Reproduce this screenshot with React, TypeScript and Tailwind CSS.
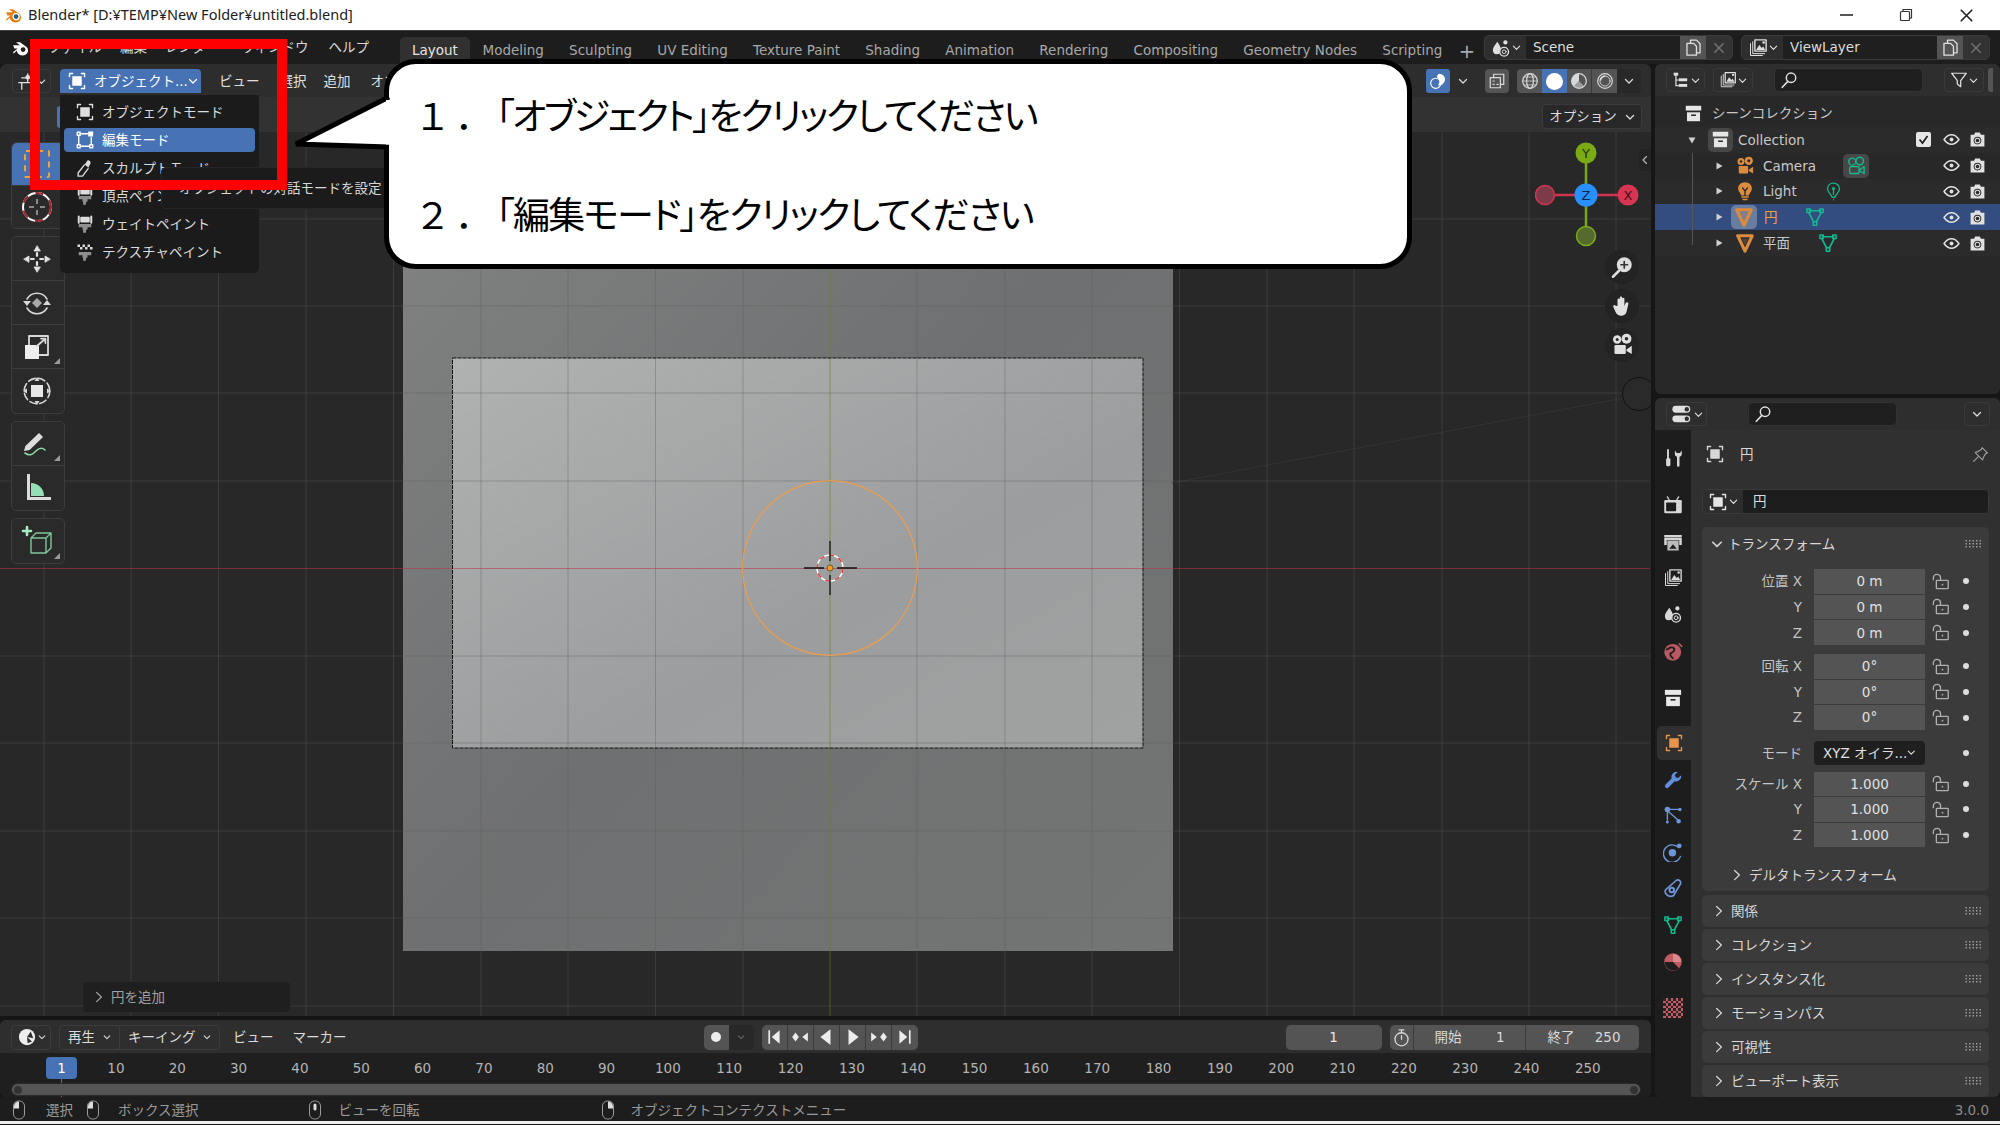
import type { ReactNode } from 'react';

type IconProps = { size?: number; className?: string };

const Svg = ({ size = 18, className, children, vb = '0 0 16 16' }: IconProps & { children: ReactNode; vb?: string }) => (
  <svg
    width={size}
    height={size}
    viewBox={vb}
    className={className}
    fill="none"
    stroke="currentColor"
    strokeWidth="1.1"
    strokeLinecap="round"
    strokeLinejoin="round"
  >
    {children}
  </svg>
);

const Chevron = ({ size = 10, className }: IconProps) => (
  <Svg size={size} className={className} vb="0 0 10 10">
    <path d="M1.5 3.5 5 7l3.5-3.5" strokeWidth="1.3" />
  </Svg>
);
const ChevronRight = ({ size = 12, className }: IconProps) => (
  <Svg size={size} className={className} vb="0 0 10 10">
    <path d="M3 1.2 7 5 3 8.8" strokeWidth="1" />
  </Svg>
);
const Caret = ({ down }: { down?: boolean }) => (
  <svg width="12" height="12" viewBox="0 0 12 12" className="text-[#d0d0d0] shrink-0">
    {down ? <path d="M2.5 3.5h7L6 9.5z" fill="currentColor" /> : <path d="M3.5 2.5 9.5 6l-6 3.5z" fill="currentColor" />}
  </svg>
);

const BlenderLogo = ({ size = 18, body = '#e87d0d', eye = '#265787', className }: IconProps & { body?: string; eye?: string }) => (
  <svg width={size} height={size} viewBox="0 0 18 18" className={className}>
    <path d="M1 6.6h6.2L3.6 3.9h3.6l5.3 3.8c2.9 2.2 2.4 6-.4 7.4-2.6 1.3-6 .4-7.3-2.1-.3-.6-.4-1.2-.3-1.7L1.5 13.9c-.6-.1-.6-1-.1-1.5l3.7-2.9H2.200z" fill={body} />
    <circle cx="10" cy="10.400" r="3.300" fill="#fff" />
    <circle cx="10" cy="10.400" r="2.100" fill={eye} />
  </svg>
);

const ObjectIcon = ({ size = 18, className }: IconProps) => (
  <Svg size={size} className={className}>
    <path d="M2 4.500V2h2.500M11.500 2H14v2.500M14 11.500V14h-2.500M4.500 14H2v-2.500" />
    <rect x="4.200" y="4.200" width="7.600" height="7.600" fill="currentColor" stroke="none" />
  </Svg>
);
const EditIcon = ({ size = 18, className }: IconProps) => (
  <Svg size={size} className={className}>
    <path d="M4 3h6M3 4.500v7M13 6v5.500M4.500 13h7" />
    <rect x="1.800" y="1.800" width="2.400" height="2.400" />
    <rect x="1.800" y="11.800" width="2.400" height="2.400" />
    <rect x="11.800" y="11.800" width="2.400" height="2.400" />
    <rect x="10.500" y="1.200" width="4" height="4" fill="#fff" stroke="none" />
  </Svg>
);
const SculptIcon = ({ size = 18, className }: IconProps) => (
  <Svg size={size} className={className}>
    <path d="M7.500 5.500 2.500 12v2.500H6l4.500-6" />
    <path d="M7.800 5.200 9.800 2.200c.8-1 3.200.5 2.600 1.900L10.700 7.800z" fill="currentColor" stroke="none" />
  </Svg>
);
const PaintIcon = ({ size = 18, className, top = 'drops' }: IconProps & { top?: 'drops' | 'weight' | 'check' }) => (
  <Svg size={size} className={className}>
    {top === 'weight' && <path d="M3 2v5M13 2v5M5 3v3h6V3z" fill="currentColor" strokeWidth="1.600" />}
    {top === 'drops' && <path d="M3 2v5M13 2v5M5 3v3h6V3z" fill="currentColor" strokeWidth="1.600" />}
    {top === 'check' && (
      <path d="M2 2h2v2H2zM6 2h2v2H6zM10 2h2v2h-2zM4 4h2v2H4zM8 4h2v2H8zM12 4h2v2h-2z" fill="currentColor" stroke="none" />
    )}
    <path d="M3 8h10v2.500h-3v2H8.800V15H6.500v-2.500H6v-2H3z" fill="#8f8f8f" stroke="none" />
  </Svg>
);

const OverlayIcon = ({ size = 18 }: IconProps) => (
  <Svg size={size}>
    <circle cx="6" cy="10" r="4.500" strokeWidth="1" />
    <path d="M9 1.500a5.200 5.200 0 1 1-1 10.300 4.800 4.800 0 0 0-1-7.300c.2-1.300.9-2.500 2-3z" fill="currentColor" stroke="none" />
  </Svg>
);
const XrayIcon = ({ size = 18 }: IconProps) => (
  <Svg size={size}>
    <path d="M5 5V2h9v9h-3" />
    <rect x="2" y="5" width="9" height="9" />
    <path d="M4.500 8h1M4.500 11h1M8 11h1" />
  </Svg>
);
const WireIcon = ({ size = 18 }: IconProps) => (
  <Svg size={size}>
    <circle cx="8" cy="8" r="6.500" />
    <ellipse cx="8" cy="8" rx="3" ry="6.500" />
    <path d="M1.500 8h13M2.500 4.500h11M2.500 11.500h11" strokeWidth=".7" />
  </Svg>
);
const MaterialIcon = ({ size = 18 }: IconProps) => (
  <Svg size={size}>
    <circle cx="8" cy="8" r="6.500" />
    <path d="M8 1.500a6.500 6.500 0 0 0-4.600 11.100L8 8z" fill="currentColor" stroke="none" />
    <path d="M8 8l4.600 4.600A6.500 6.500 0 0 1 3.400 12.600z" fill="currentColor" stroke="none" opacity=".55" />
  </Svg>
);
const RenderIcon = ({ size = 18 }: IconProps) => (
  <Svg size={size}>
    <circle cx="8" cy="8" r="6.500" />
    <circle cx="8" cy="8" r="4.500" strokeWidth=".8" />
    <path d="M4 7c.5-2 2-3 3.500-3.200" strokeWidth="1.400" />
  </Svg>
);
const TreeIcon = ({ size = 18 }: IconProps) => (
  <Svg size={size}>
    <rect x="1.500" y="1.500" width="4" height="2.600" fill="currentColor" stroke="none" />
    <rect x="6" y="6.500" width="7.500" height="2.600" fill="currentColor" stroke="none" />
    <rect x="6" y="11.500" width="7.500" height="2.600" fill="currentColor" stroke="none" />
    <path d="M3.500 4v9h2M3.500 8h2" />
  </Svg>
);
const LayersIcon = ({ size = 18 }: IconProps) => (
  <Svg size={size}>
    <path d="M2 4.500V14h9.500M3.800 3v9.500h9.500" strokeWidth=".8" />
    <rect x="5.500" y="1.500" width="9" height="9" />
    <path d="M6.500 9.500 9 5.500l2 2.500 1.200-1.200 1.500 2.700z" fill="currentColor" stroke="none" />
    <circle cx="12.500" cy="3.500" r="1" fill="currentColor" stroke="none" />
  </Svg>
);
const SearchIcon = ({ size = 18 }: IconProps) => (
  <Svg size={size}>
    <circle cx="9.800" cy="6" r="4.200" strokeWidth="1.300" />
    <path d="M7 9.200 2 14.500" strokeWidth="1.400" />
  </Svg>
);
const FilterIcon = ({ size = 18 }: IconProps) => (
  <Svg size={size}>
    <path d="M1.500 2h13L9.500 8.500V14l-3-2.500v-3z" />
  </Svg>
);
const SceneIcon = ({ size = 18 }: IconProps) => (
  <Svg size={size}>
    <path d="M5 3c1.500 2.300 3 4.200 3 6.500S6.500 13 4.500 13 1.500 11.500 1.500 9.500 3.500 5.300 5 3z" fill="currentColor" stroke="none" />
    <circle cx="10.500" cy="11" r="3.500" fill="#2b2b2b" />
    <circle cx="10.500" cy="11" r="1.500" strokeWidth=".8" />
    <circle cx="11.500" cy="3.500" r="1.700" fill="currentColor" stroke="none" />
  </Svg>
);
const CopyIcon = ({ size = 18 }: IconProps) => (
  <Svg size={size}>
    <path d="M5.500 4.500V1.800h5l3 3v7.700h-3" />
    <path d="M2.500 4.500h5.500l2.500 2.500v7.500h-8z" />
  </Svg>
);
const CloseX = ({ size = 12, className }: IconProps) => (
  <Svg size={size} className={className} vb="0 0 10 10">
    <path d="M1.500 1.500l7 7M8.500 1.500l-7 7" />
  </Svg>
);
const CollectionIcon = ({ size = 18 }: IconProps) => (
  <Svg size={size}>
    <rect x="1.500" y="1.500" width="13" height="4" fill="currentColor" stroke="none" />
    <rect x="2.500" y="7" width="11" height="7.500" fill="currentColor" stroke="none" />
    <rect x="6" y="8.800" width="4" height="1.300" fill="#2a2a2a" stroke="none" />
  </Svg>
);
const Eye = ({ size = 17 }: IconProps) => (
  <Svg size={size}>
    <path d="M1 8c2-3 4.300-4.500 7-4.500S13 5 15 8c-2 3-4.300 4.500-7 4.500S3 11 1 8z" strokeWidth="1.500" />
    <circle cx="8" cy="8" r="1.800" fill="currentColor" stroke="none" />
  </Svg>
);
const RenderCam = ({ size = 17 }: IconProps) => (
  <Svg size={size}>
    <path d="M1.500 3.500h3.300l1-2h4.400l1 2h3.300v11h-13z" fill="currentColor" stroke="none" />
    <circle cx="8" cy="9" r="3.600" fill="#2b2b2b" stroke="none" />
    <circle cx="8" cy="9" r="2.200" strokeWidth="1" />
  </Svg>
);
const CameraObj = ({ size = 18, className }: IconProps) => (
  <Svg size={size} className={className}>
    <circle cx="4.800" cy="4.300" r="2.800" fill="currentColor" stroke="none" />
    <circle cx="11" cy="3.800" r="3.300" fill="currentColor" stroke="none" />
    <circle cx="4.800" cy="4.300" r="1" fill="#2b2b2b" stroke="none" />
    <circle cx="11" cy="3.800" r="1.200" fill="#2b2b2b" stroke="none" />
    <rect x="3" y="8" width="7.500" height="6" rx=".8" fill="currentColor" stroke="none" />
    <path d="M11 11l3.500-2.500V14L11 12z" fill="currentColor" stroke="none" />
  </Svg>
);
const CameraData = ({ size = 18, className }: IconProps) => (
  <Svg size={size} className={className}>
    <circle cx="5" cy="4.500" r="2.800" />
    <circle cx="11" cy="4" r="3" />
    <rect x="3" y="8.500" width="7.500" height="5.500" rx=".8" />
    <path d="M11 11l3.500-2.500V14L11 12z" />
  </Svg>
);
const BulbObj = ({ size = 18, className }: IconProps) => (
  <Svg size={size} className={className}>
    <path d="M8 1c3.200 0 5.500 2.200 5.500 5 0 2.300-1.700 3.400-2.500 5.500H5C4.200 9.400 2.500 8.300 2.500 6c0-2.800 2.300-5 5.500-5z" fill="currentColor" stroke="none" />
    <path d="M6 5.500 8 8l2-2.500M8 8v3.500" stroke="#2b2b2b" />
    <path d="M5.500 12.800h5M6.500 14.800h3" strokeWidth="1.300" />
  </Svg>
);
const BulbData = ({ size = 18, className }: IconProps) => (
  <Svg size={size} className={className}>
    <path d="M8 1c3 0 5 2 5 4.800 0 2.600-3.300 5-4 7.200H7C6.300 10.800 3 8.400 3 5.800 3 3 5 1 8 1z" />
    <circle cx="8" cy="5.500" r="1.300" fill="currentColor" stroke="none" />
    <path d="M8 7v3.500M8 14.800v.2" />
  </Svg>
);
const MeshObj = ({ size = 18, className }: IconProps) => (
  <Svg size={size} className={className}>
    <path d="M2.200 2.200h11.600L8 14.500z" strokeWidth="2.500" />
    <path d="M5.500 4.500h5L8 10z" fill="currentColor" opacity=".25" stroke="none" />
  </Svg>
);
const MeshData = ({ size = 18, className }: IconProps) => (
  <Svg size={size} className={className}>
    <path d="M3.500 3h9M3 4.500 7 12M13 4.500 9 12" strokeWidth="1.300" />
    <rect x="1.500" y="1.500" width="2.800" height="2.800" strokeWidth="1.200" />
    <rect x="11.700" y="1.500" width="2.800" height="2.800" strokeWidth="1.200" />
    <rect x="6.600" y="11.700" width="2.800" height="2.800" strokeWidth="1.200" />
  </Svg>
);
const Pin = ({ size = 17, className }: IconProps) => (
  <Svg size={size} className={className}>
    <path d="M9.500 1.500 14.500 6.500 12.800 7.200 10.500 11c.2 1 0 1.500-.6 2L3 6.200c.6-.6 1.200-.8 2-.6L8.800 3.300z" />
    <path d="M6 10 1.500 14.500" />
  </Svg>
);
const Lock = () => (
  <Svg size={19} className="text-[#b0b0b0] shrink-0">
    <path d="M2 6.500V5a3 3 0 0 1 3-3c1.500 0 2.800 1 3 2.500V7" />
    <rect x="4.500" y="7" width="10" height="7" rx=".5" />
    <rect x="9" y="10" width="1.300" height="1.300" fill="currentColor" stroke="none" />
  </Svg>
);
const Dot = () => <div className="w-[6px] h-[6px] rounded-full bg-[#dcdcdc] shrink-0" />;
const Grip = () => (
  <svg width="16" height="8" viewBox="0 0 16 8" className="shrink-0">
    {[0, 1, 2, 3, 4].map((c) =>
      [0, 1, 2].map((r) => <rect key={`${c}-${r}`} x={c * 3.500 + .5} y={r * 3} width="1.500" height="1.500" fill="#9a9a9a" />),
    )}
  </svg>
);

// property tabs
const ToolsTab = ({ size = 20 }: IconProps) => (
  <Svg size={size}>
    <path d="M4 1.500v6" strokeWidth="1.500" />
    <rect x="2.500" y="8" width="3.400" height="6.500" rx="1.200" fill="currentColor" stroke="none" />
    <path d="M9.500 2v3c0 1.200 1 2 1.700 2v7a1 1 0 0 0 2 0V7c.7 0 1.800-.8 1.800-2V2l-1.500 2h-2.500z" fill="currentColor" stroke="none" />
  </Svg>
);
const RenderTab = ({ size = 20 }: IconProps) => (
  <Svg size={size}>
    <rect x="1" y="4" width="14" height="10.500" rx="1" fill="currentColor" stroke="none" />
    <rect x="2.500" y="6" width="8" height="7" rx=".6" fill="#1d1d1d" stroke="none" />
    <path d="M5 4 3.500 1.500M11 4l1.500-2.500M12.500 7h1M12.500 10h1" stroke="#d0d0d0" />
  </Svg>
);
const OutputTab = ({ size = 20 }: IconProps) => (
  <Svg size={size}>
    <path d="M1 1.500h14v1.600H1zM1 3.500h14v6h-2V5.500H3v4H1z" fill="currentColor" stroke="none" />
    <rect x="3.500" y="6" width="9" height="8" fill="currentColor" opacity=".85" stroke="none" />
    <path d="M5 12.500 8 9l3 3.500z" fill="#1d1d1d" stroke="none" />
  </Svg>
);
const WorldTab = ({ size = 20 }: IconProps) => (
  <Svg size={size} className="text-[#b95a62]">
    <circle cx="7.800" cy="8.200" r="6.700" fill="currentColor" stroke="none" />
    <path d="M3 6c2-1 3-2.500 5-1.500S9 8 7 8.500 5.500 11 8 13" stroke="#1d1d1d" strokeWidth="1.400" />
    <path d="M13 1.500 15 3.500" stroke="currentColor" strokeWidth="1.200" />
  </Svg>
);
const WrenchTab = ({ size = 20 }: IconProps) => (
  <Svg size={size} className="text-[#5f8fdc]">
    <path d="M14.500 4.200a4 4 0 0 1-5.200 4.700L4.400 14a1.700 1.700 0 0 1-2.400-2.400l5-5A4 4 0 0 1 11.800 1.500L9.500 3.800l.6 2 2 .6z" fill="currentColor" stroke="none" />
  </Svg>
);
const ParticleTab = ({ size = 20 }: IconProps) => (
  <Svg size={size} className="text-[#6d95d8]">
    <circle cx="3.500" cy="3.500" r="2.200" fill="currentColor" stroke="none" />
    <circle cx="13.500" cy="3.500" r="1.400" fill="currentColor" stroke="none" />
    <circle cx="12.500" cy="13" r="1.800" fill="currentColor" stroke="none" />
    <circle cx="3.500" cy="13.500" r="1.200" fill="currentColor" stroke="none" />
    <path d="M5 3.500h7M4 5l8 7M3.500 6v6" />
  </Svg>
);
const PhysicsTab = ({ size = 20 }: IconProps) => (
  <Svg size={size} className="text-[#6d95d8]">
    <path d="M12.500 4.500a7 7 0 1 0 1.500 7" strokeWidth="1.100" />
    <circle cx="7.500" cy="8.500" r="3" fill="currentColor" stroke="none" />
    <circle cx="13" cy="3" r="1.900" fill="currentColor" stroke="none" />
  </Svg>
);
const ConstraintTab = ({ size = 20 }: IconProps) => (
  <Svg size={size} className="text-[#6d95d8]">
    <path d="M2 9.500 10.500 2c2-1.300 4.500.8 3.300 3l-5.300 9c-3 2-8-1-6.500-4.500z" strokeWidth="1.300" />
    <circle cx="7" cy="9.500" r="2.600" fill="currentColor" stroke="none" />
    <circle cx="7" cy="9.500" r="1" fill="#1d1d1d" stroke="none" />
  </Svg>
);
const MaterialTab = ({ size = 20 }: IconProps) => (
  <Svg size={size} className="text-[#c05b63]">
    <circle cx="8" cy="8" r="7" fill="currentColor" stroke="none" />
    <path d="M8 8H1.300A7 7 0 0 0 12.900 13z" fill="#1d1d1d" stroke="none" />
    <path d="M8 1.500A6.500 6.500 0 0 1 14.500 8H8z" fill="#d98a8f" stroke="none" />
  </Svg>
);
const TextureTab = ({ size = 20 }: IconProps) => (
  <svg width={size} height={size} viewBox="0 0 8 8" shapeRendering="crispEdges">
    <rect width="8" height="8" fill="#c05b63" />
    {[0, 1, 2, 3, 4, 5, 6, 7].map((r) =>
      [0, 1, 2, 3, 4, 5, 6, 7].map((c) => ((r + c) % 2 === 0 ? <rect key={`${r}${c}`} x={c} y={r} width="1" height="1" fill="#2b2326" /> : null)),
    )}
  </svg>
);

// toolbar icons
const SelectTool = () => (
  <svg width="28" height="30" viewBox="0 0 28 30" fill="none">
    <rect x="2" y="2" width="24" height="26" rx="1" stroke="#f0a33a" strokeWidth="2" strokeDasharray="6 5" />
    <path d="M14 14v5" stroke="#ddd" strokeWidth="1.500" />
  </svg>
);
const CursorTool = () => (
  <svg width="32" height="32" viewBox="0 0 32 32" fill="none">
    <circle cx="16" cy="16" r="14" stroke="#fff" strokeWidth="2" />
    <circle cx="16" cy="16" r="14" stroke="#a1222d" strokeWidth="2" strokeDasharray="8 8" />
    <path d="M16 8v5M16 19v5M8 16h5M19 16h5" stroke="#aaa" strokeWidth="1.500" />
  </svg>
);
const MoveTool = () => (
  <Svg size={32}>
    <path d="M8 1.500 6.500 4h3zM8 14.500 6.500 12h3zM1.500 8 4 6.500v3zM14.500 8 12 6.500v3z" fill="#e5e5e5" stroke="#e5e5e5" strokeWidth=".4" />
    <path d="M8 5v1.400M8 9.600V11M5 8h1.400M9.600 8H11" stroke="#e5e5e5" />
  </Svg>
);
const RotateTool = () => (
  <Svg size={32} className="text-[#d8d8d8]">
    <path d="M3 6a5.800 5.800 0 0 1 10 0M13 10.500a5.800 5.800 0 0 1-10 0" strokeWidth=".8" />
    <path d="M8 5.500 10.500 8 8 10.500 5.500 8z" fill="#aaa" stroke="none" />
    <path d="M1 7h4L3 9.500zM15 9h-4l2-2.500z" fill="currentColor" stroke="none" />
  </Svg>
);
const ScaleTool = () => (
  <Svg size={32} className="text-[#d8d8d8]">
    <path d="M4 7V2.500h9.500V12H9" strokeWidth=".9" />
    <rect x="2" y="7" width="7" height="7" fill="#eee" stroke="none" />
    <path d="M8 7.500 12 4M10 3.800h2.200V6" strokeWidth=".9" />
  </Svg>
);
const TransformTool = () => (
  <Svg size={32} className="text-[#d8d8d8]">
    <circle cx="8" cy="8" r="6.400" strokeWidth=".8" strokeDasharray="3.500 1.600" />
    <rect x="5" y="5" width="6" height="6" fill="#e8e8e8" stroke="none" />
    <path d="M8 1l1.200 2H6.800zM8 15l1.200-2H6.800zM1 8l2-1.200v2.400zM15 8l-2-1.200v2.400z" fill="currentColor" stroke="none" />
  </Svg>
);
const AnnotateTool = () => (
  <Svg size={32}>
    <path d="M1.500 11.500 2.200 9 9 2.500l2 2L4.300 11z" fill="#ddd" stroke="none" />
    <path d="M2 12.500c2.500 1.800 4 .5 5.500-1s3-2 4.500-.5" stroke="#8fd9a8" strokeWidth=".8" />
  </Svg>
);
const MeasureTool = () => (
  <Svg size={32}>
    <path d="M3 1h1.500v11.500H15V14H3z" fill="#dcdcdc" stroke="none" />
    <path d="M5 12V5.500a6.500 6.500 0 0 1 6.500 6.500z" fill="#94dfb5" stroke="none" />
  </Svg>
);
const AddCubeTool = () => (
  <Svg size={32} className="text-[#7fc59b]">
    <path d="M5 6.500h7.500V14H5zM5 6.500 7.500 4H15v7.500L12.500 14M12.500 6.500 15 4" strokeWidth=".7" />
    <path d="M3 1v4M1 3h4" stroke="#a6ecc4" strokeWidth="1.300" />
  </Svg>
);
const ToolCorner = () => (
  <svg width="6" height="6" viewBox="0 0 6 6" className="absolute right-[4px] bottom-[4px]">
    <path d="M6 0v6H0z" fill="#9a9a9a" />
  </svg>
);

const ZoomNav = () => (
  <Svg size={24}>
    <circle cx="9.500" cy="6.500" r="5" fill="#ddd" stroke="none" />
    <path d="M9.500 4.300v4.400M7.300 6.500h4.400" stroke="#333" />
    <path d="M6 10.500 2 14.500" stroke="#ddd" strokeWidth="1.700" />
  </Svg>
);
const HandNav = () => (
  <Svg size={24}>
    <path
      d="M5 8V3.500a.8.800 0 0 1 1.500 0V7 2.500a.8.800 0 0 1 1.600 0V7 3a.8.800 0 0 1 1.500 0v5l.8-1.800c.6-1.400 2.300-.7 1.800.6L11 12c-.6 1.700-1.700 2.500-3.500 2.500-1.700 0-3-.8-3.700-2.300L2.300 8.800C1.800 7.700 3 6.900 3.800 7.800z"
      fill="#e0e0e0"
      stroke="none"
    />
  </Svg>
);

const MouseIcon = ({ side }: { side: 'left' | 'mid' | 'right' }) => (
  <svg width="14" height="20" viewBox="0 0 14 20" fill="none" className="shrink-0">
    <rect x="1.500" y="1" width="11" height="18" rx="5" stroke="#9a9a9a" />
    {side === 'left' && <path d="M7 1.500a5 5 0 0 0-5 5v2h5z" fill="#ddd" />}
    {side === 'right' && <path d="M7 1.500a5 5 0 0 1 5 5v2H7z" fill="#ddd" />}
    {side === 'mid' && <rect x="5.500" y="3.500" width="3" height="7" rx="1.500" fill="#ddd" />}
  </svg>
);

const TopMenu = ({ label, className = '' }: { label: string; className?: string }) => (
  <span className={`text-[#d8d8d8] whitespace-nowrap ${className}`}>{label}</span>
);

const workspaces = ['Layout', 'Modeling', 'Sculpting', 'UV Editing', 'Texture Paint', 'Shading', 'Animation', 'Rendering', 'Compositing', 'Geometry Nodes', 'Scripting'];

const TitleBar = () => (
  <div className="h-[30px] bg-white flex items-center shrink-0 font-['Noto_Sans','Noto_Sans_CJK_JP',sans-serif] text-[14.500px] text-[#202020]">
    <BlenderLogo size={20} className="ml-[5px]" />
    <span className="ml-[3px] whitespace-nowrap">Blender* [D:¥TEMP¥New Folder¥untitled.blend]</span>
    <div className="ml-auto flex items-center text-[#222]">
      <div className="w-[60px] flex justify-center">
        <div className="w-[13px] h-[2px] bg-[#555]" />
      </div>
      <div className="w-[60px] flex justify-center">
        <svg width="14" height="14" viewBox="0 0 14 14" fill="none" stroke="#333" strokeWidth="1.200">
          <rect x="1.500" y="3.500" width="9" height="9" rx="1" />
          <path d="M4 3.500V1.500h8.500v8.500h-2" />
        </svg>
      </div>
      <div className="w-[60px] flex justify-center mr-[4px]">
        <CloseX size={15} className="text-[#222]" />
      </div>
    </div>
  </div>
);

const FieldGroup = ({ icon, name, className }: { icon: ReactNode; name: string; className: string }) => (
  <div className={`h-[25px] rounded-[5px] bg-[#2e2e2e] border border-[#3a3a3a] flex items-center overflow-hidden ${className}`}>
    <div className="w-[41px] flex items-center justify-center gap-[1px] text-[#e0e0e0] shrink-0">
      {icon}
      <Chevron size={9} />
    </div>
    <div className="flex-1 h-full bg-[#1f1f1f] flex items-center pl-[7px] text-[#dcdcdc]">{name}</div>
    <div className="w-[26px] h-full bg-[#545454] flex items-center justify-center text-[#e0e0e0]">
      <CopyIcon size={19} />
    </div>
    <div className="w-[26px] h-full bg-[#333] flex items-center justify-center text-[#777]">
      <CloseX size={12} />
    </div>
  </div>
);

const TopBar = () => (
  <div className="h-[34px] bg-[#1d1d1d] border-t border-[#3d3d3d] shrink-0 flex items-end">
    <div className="h-[33px] flex items-center w-[400px] shrink-0">
      <BlenderLogo size={20} body="#ffffff" eye="#1d1d1d" className="ml-[12px]" />
      <TopMenu label="ファイル" className="ml-[16px]" />
      <TopMenu label="編集" className="ml-[18px]" />
      <TopMenu label="レンダー" className="ml-[18px]" />
      <TopMenu label="ウィンドウ" className="ml-[22px]" />
      <TopMenu label="ヘルプ" className="ml-[20px]" />
    </div>
    <div className="flex items-end h-full">
      {workspaces.map((w, i) => (
        <div
          key={w}
          className={i === 0 ? 'h-[27px] px-[12px] flex items-center rounded-t-[5px] bg-[#303030] text-[#e6e6e6]' : 'h-[27px] px-[12.600px] flex items-center text-[#a8a8a8] whitespace-nowrap'}
        >
          {w}
        </div>
      ))}
      <div className="h-[27px] w-[24px] flex items-center justify-center text-[#a8a8a8] text-[20px] leading-none">+</div>
    </div>
    <div className="ml-auto h-full flex items-center gap-[8px] pr-[10px]">
      <FieldGroup icon={<SceneIcon size={20} />} name="Scene" className="w-[249px]" />
      <FieldGroup icon={<LayersIcon size={20} />} name="ViewLayer" className="w-[249px]" />
    </div>
  </div>
);

const HeaderBtn = ({ children, className = '' }: { children: ReactNode; className?: string }) => (
  <div className={`h-[24px] flex items-center justify-center ${className}`}>{children}</div>
);

const ViewportHeader = () => (
  <>
    <div className="h-[33px] pt-[1px] bg-[#2d2d2d] rounded-t-[6px] flex items-center shrink-0 text-[#e0e0e0]">
      <HeaderBtn className="ml-[12px] w-[39px] rounded-[4px] border border-[#3a3a3a] gap-[1px]">
        <Svg size={19}>
          <path d="M1.500 9h13M4 9v5.500M4 5h9M9 1.500v6.500" />
          <circle cx="9" cy="4.500" r="2" fill="currentColor" stroke="none" />
        </Svg>
        <Chevron size={9} />
      </HeaderBtn>
      <HeaderBtn className="ml-[9px] w-[141px] rounded-t-[4px] bg-[#4772b3] text-white">
        <ObjectIcon size={20} className="ml-[7px] shrink-0" />
        <span className="ml-[7px] whitespace-nowrap">オブジェクト...</span>
        <Chevron size={10} className="ml-auto mr-[3px]" />
      </HeaderBtn>
      <span className="ml-[18px]">ビュー</span>
      <span className="ml-[20px]">選択</span>
      <span className="ml-[17px]">追加</span>
      <span className="ml-[20px]">オブジェクト</span>
      <div className="ml-auto flex items-center pr-[10px]">
        <HeaderBtn className="w-[24px] rounded-[3px] bg-[#4772b3] text-white">
          <OverlayIcon />
        </HeaderBtn>
        <HeaderBtn className="w-[26px] text-[#d8d8d8]">
          <Chevron />
        </HeaderBtn>
        <HeaderBtn className="ml-[9px] w-[24px] rounded-[4px] bg-[#545454] text-[#d8d8d8]">
          <XrayIcon />
        </HeaderBtn>
        <div className="ml-[8px] flex h-[24px] rounded-[4px] overflow-hidden text-[#d8d8d8]">
          <HeaderBtn className="w-[25px] bg-[#545454]">
            <WireIcon />
          </HeaderBtn>
          <HeaderBtn className="w-[25px] bg-[#4772b3]">
            <div className="w-[17px] h-[17px] rounded-full bg-white" />
          </HeaderBtn>
          <HeaderBtn className="w-[25px] bg-[#545454] border-r border-[#3a3a3a]">
            <MaterialIcon />
          </HeaderBtn>
          <HeaderBtn className="w-[25px] bg-[#545454]">
            <RenderIcon />
          </HeaderBtn>
          <HeaderBtn className="w-[24px] bg-[#282828]">
            <Chevron />
          </HeaderBtn>
        </div>
      </div>
    </div>
    <div className="h-[35px] pt-[4px] bg-[#323232] flex items-center shrink-0">
      <div className="ml-[57px] w-[8px] h-[22px] rounded-l-[3px] bg-[#4772b3]" />
      <HeaderBtn className="ml-auto mr-[9px] w-[100px] h-[25px] rounded-[4px] bg-[#282828] border border-[#3a3a3a] text-[#dcdcdc] gap-[8px]">
        オプション
        <Chevron />
      </HeaderBtn>
    </div>
  </>
);

const gridX = [44, 131, 218.500, 306, 393.500, 481, 568, 655.500, 743, 917, 1005, 1092, 1179.500, 1267, 1354, 1442, 1529, 1616];
const gridY = [219, 306, 393, 481, 656, 743, 831, 918, 1006];

const Scene3D = () => (
  <svg width="1650" height="885" viewBox="0 132 1650 885" className="absolute inset-0">
    <defs>
      <linearGradient id="outer" x1="0" y1="0" x2="1" y2="1">
        <stop offset="0" stopColor="#828484" />
        <stop offset=".5" stopColor="#6f7071" />
        <stop offset="1" stopColor="#737575" />
      </linearGradient>
      <linearGradient id="inner" x1="0" y1="0" x2="1" y2="1">
        <stop offset="0" stopColor="#b0b2b2" />
        <stop offset=".6" stopColor="#9c9d9e" />
        <stop offset="1" stopColor="#a0a1a1" />
      </linearGradient>
    </defs>
    <rect x="403" y="140" width="770" height="811" fill="url(#outer)" />
    <rect x="452.500" y="358" width="690.500" height="390" fill="url(#inner)" />
    <path d="M1172 483 1640 395" stroke="#333" />
    {gridX.map((x) => (
      <line key={x} x1={x} x2={x} y1="132" y2="1017" stroke="#5c5c5c" strokeOpacity=".38" />
    ))}
    {gridY.map((y) => (
      <line key={y} x1="0" x2="1650" y1={y} y2={y} stroke="#5c5c5c" strokeOpacity=".38" />
    ))}
    <line x1="830" x2="830" y1="132" y2="1017" stroke="#5c8a1e" strokeOpacity=".6" />
    <line x1="0" x2="1650" y1="568.500" y2="568.500" stroke="#c0304a" strokeOpacity=".55" />
    <rect x="452.500" y="358" width="690.500" height="390" fill="none" stroke="#111" strokeDasharray="4 1" />
    <circle cx="830" cy="568" r="87.300" fill="none" stroke="#eb9d4f" strokeWidth="1.300" />
    <circle cx="830" cy="568" r="13" fill="none" stroke="#fff" strokeWidth="1.500" />
    <circle cx="830" cy="568" r="13" fill="none" stroke="#e53c3c" strokeWidth="1.500" strokeDasharray="5 5" />
    <path d="M830 541v20M830 575v20M804 568h20M837 568h20" stroke="#111" strokeWidth="1.300" />
    <circle cx="830" cy="568" r="3" fill="#f49b1d" stroke="#333" strokeWidth=".6" />
  </svg>
);

const Tool = ({ children, active, corner, short }: { children: ReactNode; active?: boolean; corner?: boolean; short?: boolean }) => (
  <div className={`relative pr-[2px] flex items-center justify-center ${short ? 'h-[42.500px]' : 'h-[44px]'} ${active ? 'bg-[#4772b3] rounded-t-[5px]' : ''}`}>
    {children}
    {corner && <ToolCorner />}
  </div>
);

const toolGroupClass = 'rounded-[5px] border border-[#3c3c3c] bg-[#2a2a2a] divide-y divide-[#3c3c3c]';

const Toolbar = () => (
  <div className="absolute left-[11px] top-[10px] w-[54px] flex flex-col gap-[7px] text-[#e0e0e0]">
    <div className={toolGroupClass}>
      <Tool active short>
        <SelectTool />
      </Tool>
      <Tool short>
        <CursorTool />
      </Tool>
    </div>
    <div className={toolGroupClass}>
      <Tool>
        <MoveTool />
      </Tool>
      <Tool>
        <RotateTool />
      </Tool>
      <Tool corner>
        <ScaleTool />
      </Tool>
      <Tool>
        <TransformTool />
      </Tool>
    </div>
    <div className={toolGroupClass}>
      <Tool corner>
        <AnnotateTool />
      </Tool>
      <Tool>
        <MeasureTool />
      </Tool>
    </div>
    <div className={toolGroupClass}>
      <Tool corner>
        <AddCubeTool />
      </Tool>
    </div>
  </div>
);

const Gizmo = () => (
  <svg width="115" height="115" viewBox="1535 140 115 115" className="absolute left-[1535px] top-[7px]">
    <path d="M1586 154v83" stroke="#7aa814" strokeWidth="2.500" />
    <path d="M1545 196h83" stroke="#cf3550" strokeWidth="2.500" />
    <circle cx="1586" cy="154" r="10.500" fill="#7aab14" />
    <circle cx="1586" cy="237" r="9.500" fill="#566a30" stroke="#7aab14" strokeWidth="1.500" />
    <circle cx="1545" cy="196" r="9.500" fill="#7d3b47" stroke="#cf3550" strokeWidth="1.500" />
    <circle cx="1628" cy="196" r="10.500" fill="#d83552" />
    <circle cx="1586" cy="196" r="11.500" fill="#2890ff" />
    <text x="1586" y="159" textAnchor="middle" fontSize="13" fontFamily="DejaVu Sans" fill="#26330a">Y</text>
    <text x="1586" y="201" textAnchor="middle" fontSize="13" fontFamily="DejaVu Sans" fill="#0b2a4d">Z</text>
    <text x="1628" y="201" textAnchor="middle" fontSize="13" fontFamily="DejaVu Sans" fill="#40101a">X</text>
  </svg>
);

const NavBtn = ({ children }: { children: ReactNode }) => (
  <div className="w-[34px] h-[34px] rounded-full bg-[#232323] flex items-center justify-center">{children}</div>
);

const Viewport = () => (
  <div className="h-[952px] flex flex-col">
    <ViewportHeader />
    <div className="relative flex-1 bg-[#282828] overflow-hidden">
      <Scene3D />
      <Toolbar />
      <Gizmo />
      <div className="absolute right-0 top-[17px] w-[12px] h-[22px] bg-[#232323] rounded-l-[4px] flex items-center justify-center text-[#bbb]">
        <Svg size={10} vb="0 0 10 10">
          <path d="M6.500 1.500 3 5l3.500 3.500" />
        </Svg>
      </div>
      <div className="absolute left-[1605px] top-[118px] flex flex-col gap-[5px]">
        <NavBtn>
          <ZoomNav />
        </NavBtn>
        <NavBtn>
          <HandNav />
        </NavBtn>
        <NavBtn>
          <CameraObj size={24} className="text-[#e0e0e0]" />
        </NavBtn>
      </div>
      <div className="absolute left-[1622px] top-[245px] w-[34px] h-[34px] rounded-full border border-[#111] bg-[#2a2a2a]" />
      <div className="absolute left-[83px] bottom-[4px] w-[207px] h-[30px] rounded-[4px] bg-[#1f1f1f] flex items-center text-[#a0a0a0] pl-[10px] gap-[6px]">
        <ChevronRight />
        円を追加
      </div>
    </div>
  </div>
);

const frames = Array.from({ length: 25 }, (_, i) => (i + 1) * 10);

const Transport = () => {
  const shapes = [
    'M3 2h1.500v12H3zM13 2v12L6 8z',
    'M1 8l3-4 3 4-3 4zM15 4v8l-5-4z',
    'M12 1v14L3 8z',
    'M4 1v14l9-7z',
    'M1 4v8l5-4zM15 8l-3-4-3 4 3 4z',
    'M3 2v12l7-6zM11.500 2H13v12h-1.500z',
  ];
  return (
    <div className="ml-[8px] flex h-[25px] w-[156px] rounded-[5px] overflow-hidden bg-[#545454] divide-x divide-[#3c3c3c]">
      {shapes.map((d) => (
        <div key={d} className="flex-1 flex items-center justify-center">
          <svg width="18" height="18" viewBox="0 0 16 16">
            <path d={d} fill="#ececec" />
          </svg>
        </div>
      ))}
    </div>
  );
};

const Timeline = () => (
  <div className="h-[77px] mt-[4px] flex flex-col rounded-[6px] overflow-hidden">
    <div className="h-[33px] pt-[1px] bg-[#2e2e2e] flex items-center shrink-0 text-[#dcdcdc]">
      <div className="ml-[11px] w-[40px] h-[25px] rounded-[4px] border border-[#3c3c3c] flex items-center justify-center gap-[1px]">
        <Svg size={20}>
          <circle cx="8" cy="8" r="6.500" fill="#eee" stroke="none" />
          <path d="M8 8 11 3.500 13 9z" fill="#2e2e2e" stroke="none" />
          <path d="M8 8 12 11.500 8.500 13z" fill="#2e2e2e" stroke="none" />
        </Svg>
        <Chevron size={8} />
      </div>
      <div className="ml-[8px] w-[161px] h-[25px] rounded-[4px] border border-[#3c3c3c] flex items-center divide-x divide-[#3c3c3c]">
        <div className="w-[60px] h-full flex items-center justify-between px-[8px]">
          再生
          <Chevron size={8} />
        </div>
        <div className="flex-1 h-full flex items-center justify-between px-[8px] whitespace-nowrap">
          キーイング
          <Chevron size={8} />
        </div>
      </div>
      <span className="ml-[13px]">ビュー</span>
      <span className="ml-[19px]">マーカー</span>
      <div className="ml-[357px] w-[50px] h-[25px] rounded-[5px] overflow-hidden flex bg-[#282828]">
        <div className="w-[25px] bg-[#545454] flex items-center justify-center">
          <div className="w-[10px] h-[10px] rounded-full bg-[#ececec]" />
        </div>
        <div className="flex-1 flex items-center justify-center text-[#666]">
          <Chevron size={8} />
        </div>
      </div>
      <Transport />
      <div className="ml-[368px] w-[96px] h-[25px] rounded-[5px] bg-[#545454] flex items-center justify-center text-[#e6e6e6]">1</div>
      <div className="ml-[8px] w-[249px] h-[25px] rounded-[5px] bg-[#545454] flex items-center divide-x divide-[#3c3c3c] text-[#d8d8d8]">
        <div className="w-[24px] h-full flex items-center justify-center">
          <Svg size={19}>
            <circle cx="8" cy="9.500" r="5.500" />
            <path d="M6 1.500h4M8 1.500v2.500M8 9.500V6.500" />
          </Svg>
        </div>
        <div className="w-[112px] h-full flex items-center justify-between pl-[21px] pr-[20px]">
          <span>開始</span>
          <span>1</span>
        </div>
        <div className="flex-1 h-full flex items-center justify-between pl-[22px] pr-[18px]">
          <span>終了</span>
          <span>250</span>
        </div>
      </div>
    </div>
    <div className="relative h-[44px] bg-[#1f1f1f] shrink-0">
      <div className="absolute left-[61px] top-[20px] bottom-0 w-[1px] bg-[#4772b3]" />
      <div className="flex items-center pl-[46px] pt-[4px] h-[26px] text-[#b4b4b4]">
        <div className="w-[31px] h-[22px] rounded-[4px] bg-[#4772b3] text-white flex items-center justify-center shrink-0">1</div>
        <div className="ml-[8.300px] flex">
          {frames.map((f) => (
            <div key={f} className="w-[61.330px] text-center">
              {f}
            </div>
          ))}
        </div>
      </div>
      <div className="relative mt-[4px] ml-[11px] w-[1630px] h-[13px] rounded-full bg-[#555] border border-[#2a2a2a] flex items-center justify-between px-[2px]">
        <div className="w-[8px] h-[8px] rounded-full bg-[#333]" />
        <div className="w-[8px] h-[8px] rounded-full bg-[#333]" />
      </div>
    </div>
  </div>
);

const OutlinerRow = ({ children, selected, odd }: { children: ReactNode; selected?: boolean; odd?: boolean }) => (
  <div className={`h-[25.800px] flex items-center text-[#c8c8c8] ${selected ? 'bg-[#334d80]' : odd ? 'bg-[#2b2b2b]' : 'bg-[#282828]'}`}>
    {children}
    <div className="ml-auto pr-[14px] flex items-center gap-[9px] text-[#e0e0e0]">
      <Eye />
      <RenderCam />
    </div>
  </div>
);

const Outliner = () => (
  <div className="h-[330px] flex flex-col rounded-[6px] overflow-hidden bg-[#282828]">
    <div className="h-[32px] bg-[#2e2e2e] flex items-center shrink-0 text-[#e0e0e0]">
      <div className="ml-[11px] w-[39px] h-[24px] rounded-[4px] border border-[#3a3a3a] flex items-center justify-center gap-[1px]">
        <TreeIcon />
        <Chevron size={9} />
      </div>
      <div className="ml-[8px] w-[40px] h-[24px] rounded-[4px] border border-[#3a3a3a] flex items-center justify-center gap-[1px]">
        <LayersIcon />
        <Chevron size={9} />
      </div>
      <div className="ml-[21px] w-[149px] h-[24px] rounded-[5px] bg-[#1f1f1f] border border-[#333] flex items-center pl-[5px]">
        <SearchIcon />
      </div>
      <div className="ml-[21px] w-[40px] h-[24px] rounded-[4px] border border-[#3a3a3a] flex items-center justify-center gap-[1px]">
        <FilterIcon />
        <Chevron size={9} />
      </div>
      <div className="ml-[4px] w-[5px] h-[24px] rounded-l-[3px] bg-[#545454]" />
    </div>
    <div className="relative">
      <div className="h-[31px] flex items-center text-[#c8c8c8] pt-[4px]">
        <div className="ml-[29px] text-[#e6e6e6] flex">
          <CollectionIcon size={19} />
        </div>
        <span className="ml-[9px]">シーンコレクション</span>
      </div>
      <div className="absolute left-[37px] top-[57px] w-[1px] h-[92px] bg-[#555]" />
      <div className="h-[25.800px] bg-[#2b2b2b] flex items-center text-[#c8c8c8]">
        <div className="ml-[31px]">
          <Caret down />
        </div>
        <div className="ml-[10px] w-[25px] h-[24px] rounded-[5px] bg-[#474747] flex items-center justify-center text-[#e6e6e6]">
          <CollectionIcon size={19} />
        </div>
        <span className="ml-[5px]">Collection</span>
        <div className="ml-auto pr-[14px] flex items-center gap-[9px] text-[#e0e0e0]">
          <div className="w-[15px] h-[15px] rounded-[2px] bg-[#e6e6e6] flex items-center justify-center mr-[3px]">
            <svg width="11" height="11" viewBox="0 0 11 11" fill="none">
              <path d="M1.500 5.500 4.500 9 9.500 2" stroke="#222" strokeWidth="1.800" />
            </svg>
          </div>
          <Eye />
          <RenderCam />
        </div>
      </div>
      <OutlinerRow>
        <div className="ml-[58px]">
          <Caret />
        </div>
        <CameraObj size={20} className="ml-[10px] text-[#dc8c3e]" />
        <span className="ml-[8px]">Camera</span>
        <div className="ml-[27px] w-[26px] h-[24px] rounded-[5px] bg-[#474747] flex items-center justify-center text-[#12b98e]">
          <CameraData size={20} />
        </div>
      </OutlinerRow>
      <OutlinerRow odd>
        <div className="ml-[58px]">
          <Caret />
        </div>
        <BulbObj size={20} className="ml-[10px] text-[#dc8c3e]" />
        <span className="ml-[8px]">Light</span>
        <BulbData size={19} className="ml-[27px] text-[#12b98e]" />
      </OutlinerRow>
      <OutlinerRow selected>
        <div className="ml-[58px]">
          <Caret />
        </div>
        <div className="ml-[6px] w-[26px] h-[24px] rounded-[5px] bg-[#6b7d9f] flex items-center justify-center text-[#e08b3c]">
          <MeshObj size={20} />
        </div>
        <span className="ml-[7px] text-[#f0a13c]">円</span>
        <MeshData size={20} className="ml-[27px] text-[#12b98e]" />
      </OutlinerRow>
      <OutlinerRow odd>
        <div className="ml-[58px]">
          <Caret />
        </div>
        <MeshObj size={20} className="ml-[10px] text-[#dc8c3e]" />
        <span className="ml-[8px]">平面</span>
        <MeshData size={20} className="ml-[28px] text-[#12b98e]" />
      </OutlinerRow>
    </div>
  </div>
);

const tabs: { cls: string; node: ReactNode }[] = [
  { cls: 'mt-[18px] text-[#d8d8d8]', node: <ToolsTab /> },
  { cls: 'mt-[27px] text-[#d8d8d8]', node: <RenderTab /> },
  { cls: 'mt-[18px] text-[#d8d8d8]', node: <OutputTab /> },
  { cls: 'mt-[15px] text-[#d8d8d8]', node: <LayersIcon size={20} /> },
  { cls: 'mt-[16px] text-[#d8d8d8]', node: <SceneIcon size={20} /> },
  { cls: 'mt-[18px]', node: <WorldTab /> },
  { cls: 'mt-[26px] text-[#e8e8e8]', node: <CollectionIcon size={20} /> },
  { cls: 'mt-[18px] ml-[2px] py-[7px] bg-[#303030] rounded-l-[5px] text-[#e8954c]', node: <ObjectIcon size={20} /> },
  { cls: 'mt-[10px]', node: <WrenchTab /> },
  { cls: 'mt-[15px]', node: <ParticleTab /> },
  { cls: 'mt-[17px]', node: <PhysicsTab /> },
  { cls: 'mt-[16px]', node: <ConstraintTab /> },
  { cls: 'mt-[17px] text-[#12b98e]', node: <MeshData size={20} /> },
  { cls: 'mt-[17px]', node: <MaterialTab /> },
  { cls: 'mt-[26px]', node: <TextureTab /> },
];

const PropRow = ({ label, value }: { label: string; value: string }) => (
  <div className="h-[25.670px] flex items-center">
    <span className="w-[100px] text-right text-[#c4c4c4] whitespace-nowrap">{label}</span>
    <div className="ml-[12px] w-[111px] h-[24.500px] bg-[#545454] flex items-center justify-center text-[#e0e0e0]">{value}</div>
    <div className="ml-[6px] flex">
      <Lock />
    </div>
    <div className="ml-[13px] flex">
      <Dot />
    </div>
  </div>
);

const PropGroup = ({ rows, className = '' }: { rows: [string, string][]; className?: string }) => (
  <div className={className}>
    {rows.map(([l, v]) => (
      <PropRow key={l} label={l} value={v} />
    ))}
  </div>
);

const Collapsed = ({ label }: { label: string }) => (
  <div className="h-[32px] rounded-[5px] bg-[#3b3b3b] flex items-center pl-[11px] pr-[8px] text-[#d8d8d8] shrink-0">
    <ChevronRight size={12} />
    <span className="ml-[6px]">{label}</span>
    <div className="ml-auto flex">
      <Grip />
    </div>
  </div>
);

const Properties = () => (
  <div className="h-[699px] mt-[4px] flex flex-col rounded-[6px] overflow-hidden bg-[#303030]">
    <div className="h-[32px] bg-[#2e2e2e] flex items-center shrink-0 text-[#e0e0e0]">
      <div className="ml-[11px] w-[41px] h-[24px] rounded-[4px] border border-[#3a3a3a] flex items-center justify-center gap-[1px]">
        <Svg size={22}>
          <rect x="1" y="2" width="13" height="5" rx="2.500" fill="currentColor" stroke="none" />
          <rect x="1" y="9" width="13" height="5" rx="2.500" fill="currentColor" stroke="none" />
          <circle cx="11.500" cy="4.500" r="1.600" fill="#2e2e2e" stroke="none" />
          <circle cx="11.500" cy="11.500" r="1.600" fill="#2e2e2e" stroke="none" />
        </Svg>
        <Chevron size={9} />
      </div>
      <div className="ml-[41px] w-[149px] h-[24px] rounded-[5px] bg-[#1f1f1f] border border-[#333] flex items-center pl-[5px]">
        <SearchIcon />
      </div>
      <div className="ml-[67px] w-[26px] h-[24px] rounded-[4px] border border-[#3a3a3a] flex items-center justify-center">
        <Chevron size={10} />
      </div>
    </div>
    <div className="flex flex-1 min-h-0">
      <div className="w-[36px] bg-[#1d1d1d] flex flex-col items-center shrink-0">
        {tabs.map((t, i) => (
          <div key={i} className={`flex justify-center self-stretch ${t.cls}`}>
            {t.node}
          </div>
        ))}
      </div>
      <div className="flex-1 min-w-0 pl-[11px] pr-[11px] flex flex-col">
        <div className="h-[32px] mt-[8px] flex items-center text-[#d8d8d8]">
          <ObjectIcon size={20} className="ml-[3px]" />
          <span className="ml-[15px]">円</span>
          <Pin className="ml-auto text-[#a0a0a0]" />
        </div>
        <div className="mt-[19px] h-[25px] rounded-[5px] border border-[#3a3a3a] flex items-center overflow-hidden bg-[#2d2d2d] shrink-0">
          <div className="w-[40px] flex items-center justify-center gap-[1px] text-[#e6e6e6] shrink-0">
            <ObjectIcon size={20} />
            <Chevron size={9} />
          </div>
          <div className="flex-1 h-full bg-[#1d1d1d] flex items-center pl-[10px] text-[#dcdcdc]">円</div>
        </div>
        <div className="mt-[13px] h-[364px] rounded-[5px] bg-[#3b3b3b] shrink-0 text-[#d8d8d8]">
          <div className="h-[34px] flex items-center pl-[9px] pr-[8px]">
            <Chevron size={12} />
            <span className="ml-[5px]">トランスフォーム</span>
            <div className="ml-auto flex">
              <Grip />
            </div>
          </div>
          <PropGroup
            className="mt-[7.500px]"
            rows={[
              ['位置 X', '0 m'],
              ['Y', '0 m'],
              ['Z', '0 m'],
            ]}
          />
          <PropGroup
            className="mt-[8px]"
            rows={[
              ['回転 X', '0°'],
              ['Y', '0°'],
              ['Z', '0°'],
            ]}
          />
          <div className="mt-[10px] h-[25px] flex items-center">
            <span className="w-[100px] text-right text-[#c4c4c4]">モード</span>
            <div className="ml-[12px] w-[111px] h-[24px] rounded-[4px] bg-[#1f1f1f] flex items-center justify-between px-[9px] text-[#e0e0e0] whitespace-nowrap">
              XYZ オイラ...
              <Chevron size={9} />
            </div>
            <div className="ml-[38px] flex">
              <Dot />
            </div>
          </div>
          <PropGroup
            className="mt-[5.500px]"
            rows={[
              ['スケール X', '1.000'],
              ['Y', '1.000'],
              ['Z', '1.000'],
            ]}
          />
          <div className="mt-[17px] flex items-center pl-[29px]">
            <ChevronRight />
            <span className="ml-[6px]">デルタトランスフォーム</span>
          </div>
        </div>
        <div className="mt-[4px] flex flex-col gap-[2px]">
          {['関係', 'コレクション', 'インスタンス化', 'モーションパス', '可視性', 'ビューポート表示'].map((p) => (
            <Collapsed key={p} label={p} />
          ))}
        </div>
      </div>
    </div>
  </div>
);

const StatusBar = () => (
  <div className="h-[24px] pt-[2px] bg-[#1d1d1d] shrink-0 flex items-center text-[#999]">
    <div className="ml-[12px] flex">
      <MouseIcon side="left" />
    </div>
    <span className="ml-[20px]">選択</span>
    <div className="ml-[13px] flex">
      <MouseIcon side="left" />
    </div>
    <span className="ml-[18px]">ボックス選択</span>
    <div className="ml-[109px] flex">
      <MouseIcon side="mid" />
    </div>
    <span className="ml-[17px]">ビューを回転</span>
    <div className="ml-[181px] flex">
      <MouseIcon side="right" />
    </div>
    <span className="ml-[16px]">オブジェクトコンテクストメニュー</span>
    <span className="ml-auto mr-[11px] text-[#8a8a8a]">3.0.0</span>
  </div>
);

const ModeMenu = () => (
  <div className="absolute left-[60px] top-[95px] w-[199px] h-[178px] rounded-b-[5px] bg-[#1b1b1b] px-[4px] pt-[3px] text-[#dcdcdc]">
    <div className="h-[28px] flex items-center pl-[11px] gap-[7px]">
      <ObjectIcon size={20} className="text-[#e0e0e0]" />
      オブジェクトモード
    </div>
    <div className="h-[24px] mt-[2px] rounded-[4px] bg-[#4772b3] text-white flex items-center pl-[11px] gap-[7px]">
      <EditIcon size={20} />
      編集モード
    </div>
    <div className="h-[28px] mt-[2px] flex items-center pl-[11px] gap-[7px]">
      <SculptIcon size={20} />
      スカルプトモード
    </div>
    <div className="h-[28px] flex items-center pl-[11px] gap-[7px]">
      <PaintIcon size={20} />
      頂点ペイント
    </div>
    <div className="h-[28px] flex items-center pl-[11px] gap-[7px]">
      <PaintIcon size={20} top="weight" />
      ウェイトペイント
    </div>
    <div className="h-[28px] flex items-center pl-[11px] gap-[7px]">
      <PaintIcon size={20} top="check" />
      テクスチャペイント
    </div>
  </div>
);

const Callout = () => (
  <>
    <div className="absolute left-[384px] top-[59px] w-[1028px] h-[210px] rounded-[32px] border-[5px] border-black bg-white text-black font-['Noto_Sans_CJK_JP',sans-serif] text-[37px] leading-none">
      <div className="absolute left-[25px] top-[32px] whitespace-nowrap tracking-[4px]">
        １．<span className="[font-feature-settings:'palt'] tracking-[-2.400px]">「オブジェクト」をクリックしてください</span>
      </div>
      <div className="absolute left-[25px] top-[131px] whitespace-nowrap tracking-[4px]">
        ２．<span className="[font-feature-settings:'palt'] tracking-[-1.600px]">「編集モード」をクリックしてください</span>
      </div>
    </div>
    <svg width="110" height="70" viewBox="285 90 110 70" className="absolute left-[285px] top-[90px]">
      <path d="M389 97 296 144 389 147" fill="#fff" stroke="#000" strokeWidth="5" strokeLinejoin="miter" />
      <rect x="386" y="100" width="9" height="44.500" fill="#fff" />
    </svg>
  </>
);

export default function App() {
  return (
    <div className="relative w-[2000px] h-[1125px] overflow-hidden flex flex-col bg-[#161616] text-[13.500px] font-['DejaVu_Sans','Noto_Sans_CJK_JP',sans-serif]">
      <TitleBar />
      <TopBar />
      <div className="flex h-[1033px] shrink-0">
        <div className="w-[1651px] flex flex-col shrink-0">
          <Viewport />
          <Timeline />
        </div>
        <div className="ml-[4px] flex-1 min-w-0 flex flex-col">
          <Outliner />
          <Properties />
        </div>
      </div>
      <StatusBar />
      <div className="h-[3px] bg-[#eeeeee] shrink-0" />

      <ModeMenu />
      <div className="absolute left-[161px] top-[167px] w-[240px] h-[42px] rounded-[5px] bg-[#1b1b1b] border border-[#262626] flex items-center pl-[17px] text-[#d8d8d8] whitespace-nowrap">
        オブジェクトの対話モードを設定
      </div>
      <div className="absolute left-[30px] top-[39px] w-[257px] h-[151px] border-[10px] border-[#ff0000]" />
      <Callout />
    </div>
  );
}
